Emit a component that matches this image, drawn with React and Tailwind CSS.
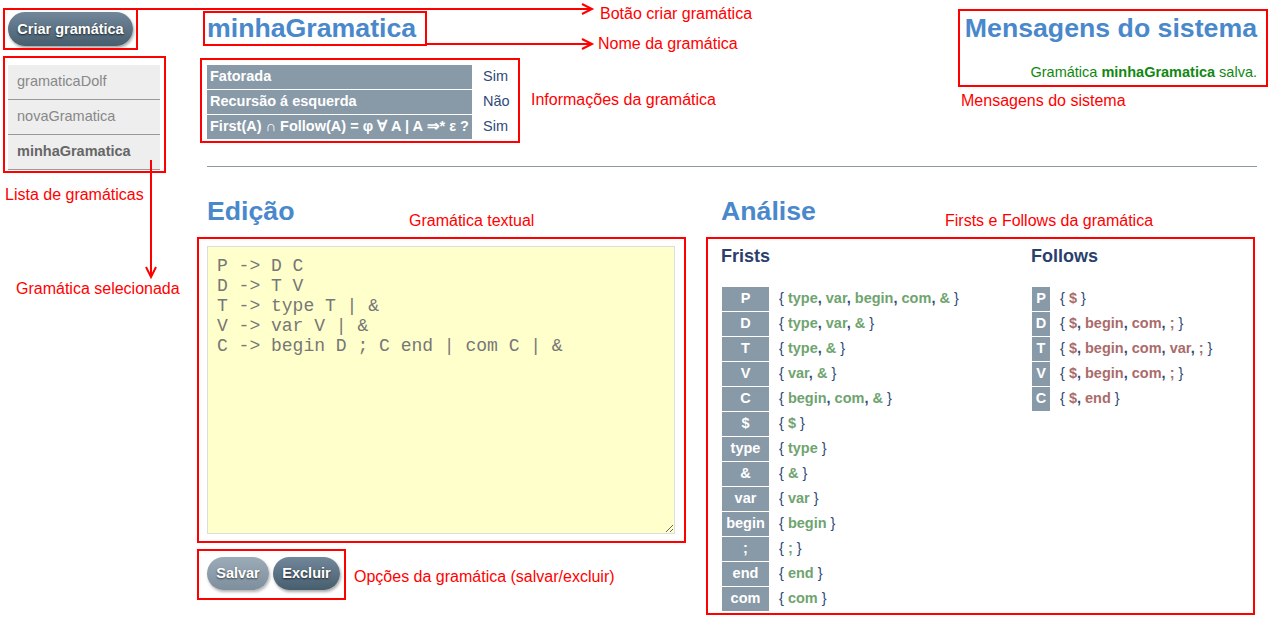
import React from "react";

const grammars = [
    { name: "gramaticaDolf", selected: false },
    { name: "novaGramatica", selected: false },
    { name: "minhaGramatica", selected: true }
];

const info = [
    { label: "Fatorada", value: "Sim" },
    { label: "Recursão á esquerda", value: "Não" },
    { label: "First(A) ∩ Follow(A) = φ ∀ A | A ⇒* ε ?", value: "Sim" }
];

const firsts = [
    ["P", ["type", "var", "begin", "com", "&"]],
    ["D", ["type", "var", "&"]],
    ["T", ["type", "&"]],
    ["V", ["var", "&"]],
    ["C", ["begin", "com", "&"]],
    ["$", ["$"]],
    ["type", ["type"]],
    ["&", ["&"]],
    ["var", ["var"]],
    ["begin", ["begin"]],
    [";", [";"]],
    ["end", ["end"]],
    ["com", ["com"]]
];

const follows = [
    ["P", ["$"]],
    ["D", ["$", "begin", "com", ";"]],
    ["T", ["$", "begin", "com", "var", ";"]],
    ["V", ["$", "begin", "com", ";"]],
    ["C", ["$", "end"]]
];

const grammarText = `P -> D C
D -> T V
T -> type T | &
V -> var V | &
C -> begin D ; C end | com C | &`;

function SetText({ items, color }) {
    return (
        <span className="text-[#2f4a78]">
            {"{ "}
            {items.map((it, i) => (
                <span key={i}>
                    <span className={`font-bold ${color}`}>{it}</span>
                    {i < items.length - 1 && <span className="font-bold">, </span>}
                </span>
            ))}
            {" }"}
        </span>
    );
}

function SetTable({ rows, labelWidth, color }) {
    return (
        <div className="flex flex-col gap-px">
            {rows.map(([sym, items]) => (
                <div key={sym} className="flex items-center h-[24px]">
                    <div className={`${labelWidth} h-full bg-[#8899a8] text-white font-bold flex items-center justify-center`}>
                        {sym}
                    </div>
                    <div className="pl-[10px]">
                        <SetText items={items} color={color} />
                    </div>
                </div>
            ))}
        </div>
    );
}

const btnDark = "rounded-full bg-linear-to-b from-[#72889a] to-[#475e6f] text-white font-bold [text-shadow:0_1px_2px_rgba(0,0,0,0.7)] shadow-[1px_2px_3px_rgba(0,0,0,0.35)]";
const btnLight = "rounded-full bg-linear-to-b from-[#9cabb8] to-[#7d8e9c] text-white font-bold [text-shadow:0_1px_2px_rgba(0,0,0,0.6)] shadow-[1px_2px_3px_rgba(0,0,0,0.3)]";

function Note({ className, children }) {
    return (
        <span className={`absolute text-[16px] leading-[18px] text-[#ff0000] whitespace-nowrap ${className}`}>
            {children}
        </span>
    );
}

function Box({ className }) {
    return <div className={`absolute border-2 border-[#ff0000] ${className}`} />;
}

export default function App() {
    return (
        <div className="relative w-[1270px] h-[623px] bg-white overflow-hidden font-['Liberation_Sans',Arial,sans-serif] text-[14.5px]">
            <div className="flex">
                {/* Sidebar */}
                <aside className="w-[207px] shrink-0 pl-2 pt-3">
                    <button className={`h-[34px] w-[125px] pt-px ${btnDark}`}>Criar gramática</button>
                    <ul className="mt-[19px] w-[152px]">
                        {grammars.map((g) => (
                            <li
                                key={g.name}
                                className={`h-[35px] flex items-center pl-[9px] bg-[#eeeeee] border-b border-[#999] ${g.selected ? "font-bold text-[#666]" : "text-[#888]"}`}
                            >
                                {g.name}
                            </li>
                        ))}
                    </ul>
                </aside>

                {/* Main */}
                <main className="flex-1 pr-[13px]">
                    <div className="flex justify-between">
                        <div>
                            <h1 className="mt-3 leading-[32px] text-[26.7px] font-bold text-[#4a88cc]">minhaGramatica</h1>
                            <div className="mt-[21px] grid grid-cols-[265px_auto] gap-y-px gap-x-[11px]">
                                {info.map((r) => (
                                    <React.Fragment key={r.label}>
                                        <div className="h-[24px] bg-[#8899a8] text-white font-bold pl-[3px] flex items-center">{r.label}</div>
                                        <div className="h-[24px] flex items-center text-[#2f4a78]">{r.value}</div>
                                    </React.Fragment>
                                ))}
                            </div>
                        </div>
                        <div className="text-right">
                            <h2 className="mt-3 leading-[32px] text-[26.7px] font-bold text-[#4a88cc]">Mensagens do sistema</h2>
                            <p className="mt-[19px] leading-[18px] text-[#118811]">
                                Gramática <b>minhaGramatica</b> salva.
                            </p>
                        </div>
                    </div>

                    <hr className="mt-[27px] border-0 border-t border-[#8899a8]" />

                    <div className="flex">
                        {/* Edição */}
                        <section className="w-[514px] shrink-0">
                            <h2 className="mt-7 leading-[32px] text-[26.7px] font-bold text-[#4a88cc]">Edição</h2>
                            <textarea
                                readOnly
                                defaultValue={grammarText}
                                className="block mt-[19px] w-[468px] h-[288px] bg-[#ffffcc] border border-[#dddddd] pl-[9px] pt-[9px] font-['Liberation_Mono','Courier_New',monospace] text-[18px] leading-[20px] text-[#777] outline-none"
                            />
                            <div className="mt-[23px] flex gap-1">
                                <button className={`h-[33px] w-[62px] ${btnLight}`}>Salvar</button>
                                <button className={`h-[33px] w-[67px] ${btnDark}`}>Excluir</button>
                            </div>
                        </section>

                        {/* Análise */}
                        <section className="flex-1">
                            <h2 className="mt-7 leading-[32px] text-[26.7px] font-bold text-[#4a88cc]">Análise</h2>
                            <div className="flex">
                                <div className="w-[310px]">
                                    <h3 className="mt-[17px] leading-[24px] text-[18px] font-bold text-[#2b3f6c]">Frists</h3>
                                    <div className="mt-[19px] pl-px">
                                        <SetTable rows={firsts} labelWidth="w-[47px]" color="text-[#6fa46f]" />
                                    </div>
                                </div>
                                <div>
                                    <h3 className="mt-[17px] leading-[24px] text-[18px] font-bold text-[#2b3f6c]">Follows</h3>
                                    <div className="mt-[19px] pl-px">
                                        <SetTable rows={follows} labelWidth="w-[18px]" color="text-[#aa6b6b]" />
                                    </div>
                                </div>
                            </div>
                        </section>
                    </div>
                </main>
            </div>

            {/* Annotations */}
            <Box className="left-[3px] top-[8px] w-[135px] h-[42px]" />
            <Box className="left-[3px] top-[56px] w-[163px] h-[117px]" />
            <Box className="left-[203px] top-[11px] w-[224px] h-[35px]" />
            <Box className="left-[200px] top-[58px] w-[320px] h-[85px]" />
            <Box className="left-[958px] top-[9px] w-[310px] h-[78px]" />
            <Box className="left-[197px] top-[237px] w-[489px] h-[306px]" />
            <Box className="left-[197px] top-[549px] w-[149px] h-[51px]" />
            <Box className="left-[706px] top-[237px] w-[549px] h-[378px]" />

            <svg className="absolute inset-0 pointer-events-none" width="1270" height="623">
                <g stroke="#ff0000" strokeWidth="2" fill="none">
                    <path d="M138 9 H591" />
                    <path d="M582 4 L592 9 L582 14" />
                    <path d="M427 44 H591" />
                    <path d="M582 39 L592 44 L582 49" />
                    <path d="M151 160 V276" />
                    <path d="M146 267 L151 277 L156 267" />
                </g>
            </svg>

            <Note className="left-[600px] top-[5px]">Botão criar gramática</Note>
            <Note className="left-[598px] top-[35px]">Nome da gramática</Note>
            <Note className="left-[531px] top-[91px]">Informações da gramática</Note>
            <Note className="left-[961px] top-[92px]">Mensagens do sistema</Note>
            <Note className="left-[5px] top-[186px]">Lista de gramáticas</Note>
            <Note className="left-[16px] top-[280px]">Gramática selecionada</Note>
            <Note className="left-[409px] top-[212px]">Gramática textual</Note>
            <Note className="left-[945px] top-[212px]">Firsts e Follows da gramática</Note>
            <Note className="left-[354px] top-[568px]">Opções da gramática (salvar/excluir)</Note>
        </div>
    );
}
